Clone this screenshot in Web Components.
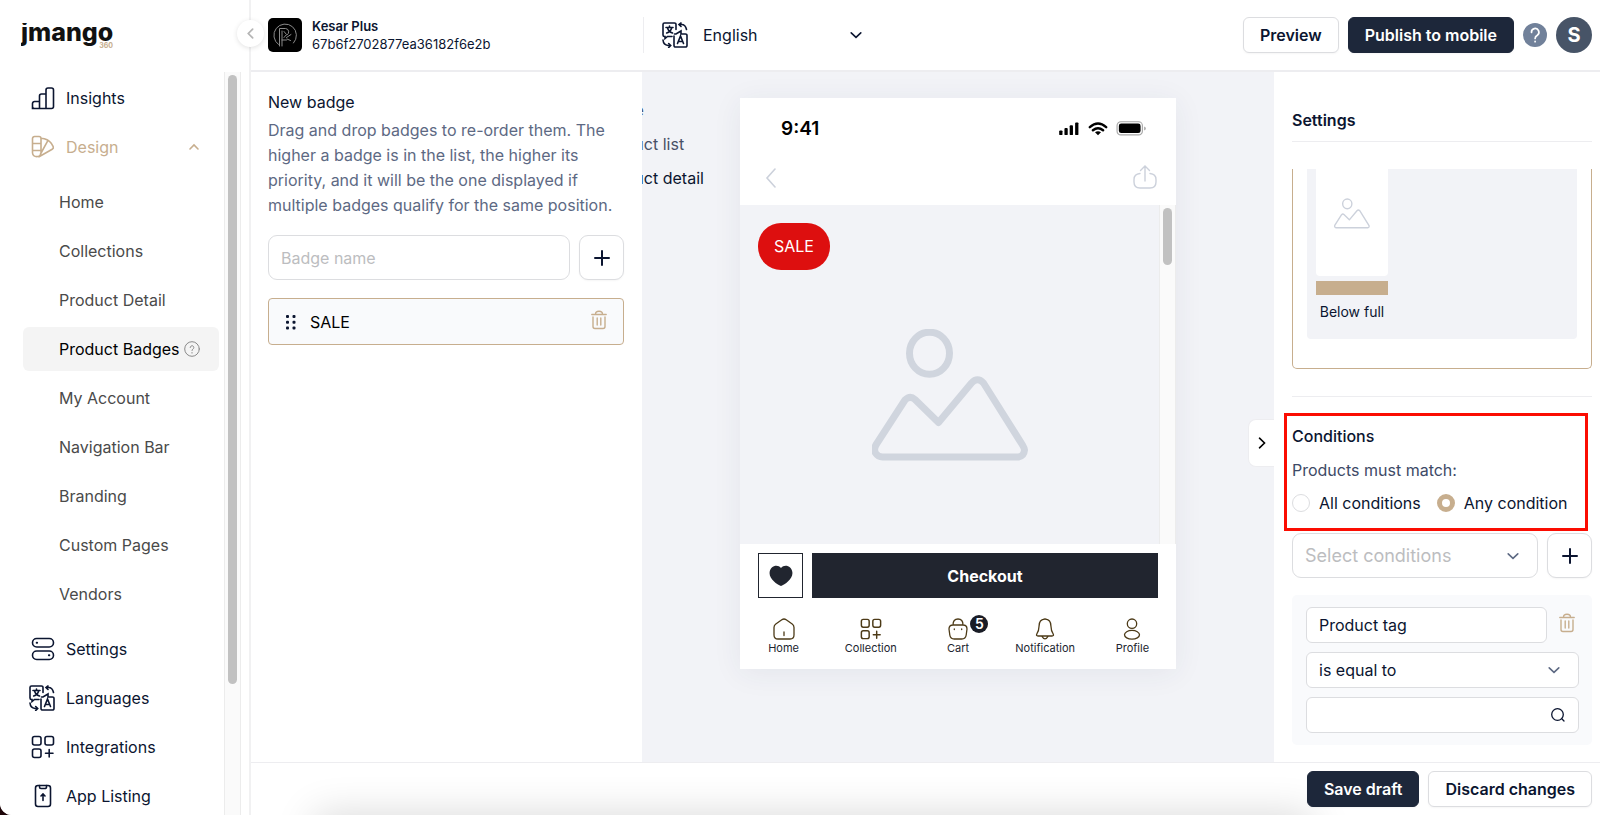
<!DOCTYPE html>
<html lang="en">
<head>
<meta charset="utf-8">
<title>Product Badges</title>
<style>
    body {
        margin: 0;
        background-color: #1d0508;
        font-family: Inter, "Liberation Sans", sans-serif;
        font-size: 16px;
        color: #0b1530;
        --tan: #c7ae8e;
        --navy: #1d273a;
        --line: #ededf0;
        --control: #dcdde0;
        --canvas: #f2f3f7;
        --muted: #5d6983;
    }
</style>
</head>
<body>
<badge-editor></badge-editor>

<script>
const ICONS = {
    insights: ["0 0 24 24", `<path d="M1.500 22.500v-5a2 2 0 0 1 2-2h5v7zM8.500 22.500V10a2 2 0 0 1 2-2H15v14.500zM15 22.500V4a2 2 0 0 1 2-2h3.500a2 2 0 0 1 2 2v16.500a2 2 0 0 1-2 2H3.500a2 2 0 0 1-2-2"/>`],
    design: ["0 0 24 24", `<path d="M3.500 1.500H8a2 2 0 0 1 2 2v14.500a4.300 4.300 0 0 1-8.500 0V3.500a2 2 0 0 1 2-2zM1.500 8.500H10M1.500 15.500H10M10 3.200q7 .5 10.200 5l2 3.500q.6 1.500-1 2.600L8 21.800M17 5.300 9.500 19"/>`],
    settings: ["0 0 24 24", `<rect x="1.500" y="1.500" width="21" height="8.500" rx="4.200"/><rect x="1.500" y="14" width="21" height="8.500" rx="4.200"/><path stroke-width="2" d="M5.700 5.700h.4M17.900 18.300h.4"/>`],
    translate: ["0 0 26 26", `<path d="M14 7.500V2.500a1.500 1.500 0 0 0-1.500-1.500h-10A1.500 1.500 0 0 0 1 2.500V13a1.500 1.500 0 0 0 1.500 1.500H3v2l2.500-2H10M12.500 12h1.500l5-3v3h4.500a1.500 1.500 0 0 1 1.500 1.500v10a1.500 1.500 0 0 1-1.500 1.500H13.500a1.500 1.500 0 0 1-1.500-1.500V14M4 5.500h7M7.500 4v1.500M5.500 5.700q1 4 5 5.300M9.700 5.700q-1 4-5 5.300M15.500 21.500l3-7.500 3 7.500M16.500 19.500h4M17 2.500h2.500q4 0 5 5M19 1l-2 1.500L19 4.500M1 18q.5 5 5 5.500h2.500M6.700 21.500l2 2-2 2"/>`],
    grid: ["0 0 24 24", `<rect x="1.500" y="1.500" width="8.500" height="8.500" rx="2"/><rect x="14" y="1.500" width="8.500" height="8.500" rx="2"/><rect x="1.500" y="14" width="8.500" height="8.500" rx="2"/><path d="M18.200 14.500v7.500M14.500 18.200h7.500"/>`],
    listing: ["0 0 24 24", `<rect x="4.500" y="1.500" width="15" height="21" rx="2.500"/><path d="M8.500 1.500v1.500a1.500 1.500 0 0 0 1.500 1.500h4a1.500 1.500 0 0 0 1.500-1.500V1.500M12 16.500v-6M10 12l2-2 2 2"/>`],
    help: ["0 0 16 16", `<circle cx="8" cy="8" r="7.300"/><path d="M6.200 6.500a1.800 1.800 0 1 1 2.800 1.500q-1 .6-1 1.500M8 11.500v.6"/>`],
    question: ["0 0 24 24", `<path d="M8.500 9.500a3.700 3.700 0 1 1 5.800 2.700q-2.200 1.300-2.200 3.300M12.100 18.300v.4"/>`],
    up: ["0 0 12 12", `<path d="M2 8l4-4 4 4"/>`],
    down: ["0 0 12 12", `<path d="M1.200 3.800 6 8.300l4.800-4.500"/>`],
    left: ["0 0 12 12", `<path d="M8 2 4 6l4 4"/>`],
    right: ["0 0 12 12", `<path d="M3.500 1.200 8.500 6l-5 4.800"/>`],
    back: ["0 0 20 20", `<path d="M14 1 6 10l8 9"/>`],
    plus: ["0 0 16 16", `<path d="M8 1v14M1 8h14"/>`],
    drag: ["0 0 12 16", `<g fill="currentColor" stroke="none"><rect x="1" y="1" width="3" height="3" rx="1"/><rect x="7.500" y="1" width="3" height="3" rx="1"/><rect x="1" y="6.700" width="3" height="3" rx="1"/><rect x="7.500" y="6.700" width="3" height="3" rx="1"/><rect x="1" y="12.500" width="3" height="3" rx="1"/><rect x="7.500" y="12.500" width="3" height="3" rx="1"/></g>`],
    trash: ["0 0 16 20", `<path d="M.8 4.500h14.400M4.500 4.300a3.500 3 0 0 1 7 0M2 7v9.500A2 2 0 0 0 4 18.500h8a2 2 0 0 0 2-2V7M6.200 8v7M9.800 8v7"/>`],
    search: ["0 0 16 16", `<circle cx="7.500" cy="7.500" r="5.800"/><path d="M11.800 11.800 14 14"/>`],
    signal: ["0 0 22 16", `<g fill="currentColor" stroke="none"><rect x="0" y="10" width="3.500" height="5" rx="1"/><rect x="5.600" y="7.500" width="3.500" height="7.500" rx="1"/><rect x="11.200" y="4.500" width="3.500" height="10.500" rx="1"/><rect x="17" y="1.500" width="3.500" height="13.500" rx="1"/></g>`],
    wifi: ["0 0 20 16", `<path stroke-width="2.600" d="M1.300 6.500q8.700-7.500 17.400 0M4.600 9.900q5.400-4.500 10.800 0"/><path fill="currentColor" stroke="none" d="M6.800 12q3.200-2.400 6.400 0L10 15.300z"/>`],
    battery: ["0 0 32 16", `<rect x=".6" y=".8" width="27" height="14" rx="4" stroke="#a6a6a6" stroke-width="1.200"/><rect x="2.500" y="2.700" width="23.200" height="10.200" rx="2.500" fill="currentColor" stroke="none"/><path d="M29.500 5.800v4.400q1.800-.7 1.800-2.200t-1.800-2.200z" fill="#a6a6a6" stroke="none"/>`],
    share: ["0 0 24 24", `<path d="M12 16V1.500M7.500 5.500 12 1l4.500 4.500M7 8.500q-6 .5-6 6v2.500q0 6 6 6h10q6 0 6-6v-2.500q0-5.500-6-6"/>`],
    picture: ["0 0 156 132", `<ellipse cx="57.500" cy="24.200" rx="20" ry="21"/><path stroke-linejoin="round" d="M10.500 128h136q5.500-1 6-7-.2-2-2-5L111.500 54q-6-6.500-12 0L66.500 93.500 43 70.500q-5-4.500-10 .5L4.500 115q-3.200 5-1 9 2.500 4 7 4z"/>`],
    heart: ["0 0 24 22", `<path fill="currentColor" stroke="none" d="M12 21C8 19.500 0 13.500.6 7.500 1 1 8.500-1.500 12 3c3.500-4.500 11-2 11.400 4.500C24 13.500 16 19.500 12 21z"/>`],
    home: ["0 0 22 22", `<path d="M8.800 1.700q2.200-1.400 4.400 0l6 4.300q1.800 1.300 1.800 3.500V17q0 4-4 4H5q-4 0-4-4V9.500Q1 7.300 2.800 6zM11 14v3.500"/>`],
    cart: ["0 0 22 22", `<path d="M2 11q0-4 4-4h10q4 0 4 4l-.8 6q-.6 4-4.500 4H7.300q-3.900 0-4.500-4zM6 7q0-6 5-6t5 6M7.300 11v.5M14.700 11v.5"/>`],
    bell: ["0 0 22 22", `<path d="M11 1.200q6 0 6 7.300 0 4 2.200 7.500.9 2-1.200 2H4q-2.100 0-1.200-2Q5 12.500 5 8.500q0-7.300 6-7.300zM9 1.500q2-1 4 0M8 18.300q3 5 6 0"/>`],
    profile: ["0 0 22 22", `<circle cx="11" cy="5.700" r="4.700"/><ellipse cx="11" cy="16.800" rx="7.500" ry="4.400"/>`],
    kp: ["0 0 34 34", `<path d="M10.500 26.500a11.300 11.300 0 1 1 15-1.500M11.500 28V10.500h6a3.500 3.500 0 0 1 1.500 6.500M14 28V13M14 22h4.500M16 13.500l2.500 3-2.500 3M18.500 19.500l4.500-3M19 21l3.500 1.500"/>`]
};

// <app-icon name="plus">, sized by its own width and height
class AppIcon extends HTMLElement {
    connectedCallback() {
        const root = this.attachShadow({ mode: "open" });
        const [viewBox, shapes] = ICONS[this.getAttribute("name")];
        const stroke = this.getAttribute("stroke") || "1.6";
        root.innerHTML = `
            <style>
                :host { display: block; width: 24px; height: 24px; flex: none; }
                svg { display: block; width: 100%; height: 100%; }
            </style>
            <svg viewBox="${viewBox}" fill="none" stroke="currentColor" stroke-width="${stroke}" stroke-linecap="round" aria-hidden="true">${shapes}</svg>
        `;
    }
}

// Base class: clones the static template of each element
class BaseElement extends HTMLElement {
    constructor() {
        super();
        this.attachShadow({ mode: "open" });
        const template = document.createElement("template");
        template.innerHTML = this.constructor.html;
        this.shadowRoot.appendChild(template.content.cloneNode(true));
    }
}

class AppButton extends BaseElement {
    static html = `
        <style>
            :host { display: block; flex: none; }
            button {
                box-sizing: border-box;
                width: 100%;
                height: 36px;
                padding: 0 16px;
                border: 1px solid var(--control);
                border-radius: 6px;
                background-color: white;
                color: #0b1530;
                font: 600 16px Inter, sans-serif;
                white-space: nowrap;
                box-shadow: 0 1px 2px rgba(0, 0, 0, 0.04);
                cursor: pointer;
            }
            :host([dark]) button { background-color: var(--navy); border-color: var(--navy); color: white; }
            :host([square]) button {
                display: grid;
                place-items: center;
                width: 45px;
                height: 45px;
                padding: 0;
                border-radius: 9px;
            }
        </style>
        <button type="button"><slot></slot></button>
    `;

    connectedCallback() {
        const label = this.getAttribute("label");
        if (label) this.shadowRoot.querySelector("button").setAttribute("aria-label", label);
    }
}

class AppSelect extends BaseElement {
    static html = `
        <style>
            :host { display: grid; align-items: center; font-size: 16px; }
            select, app-icon { grid-area: 1 / 1; }
            select {
                box-sizing: border-box;
                width: 100%;
                height: 36px;
                padding: 0 12px;
                border: 1px solid var(--control);
                border-radius: 6px;
                background-color: white;
                color: #0b1530;
                font: inherit;
                appearance: none;
            }
            app-icon { width: 12px; height: 12px; margin-right: 19px; justify-self: end; color: #5d6983; pointer-events: none; }
            :host([large]) { font-size: 18px; }
            :host([large]) select { height: 45px; border-radius: 9px; color: #bcbdc0; }
            :host([plain]) select { border-color: transparent; padding: 0; }
            :host([plain]) app-icon { margin-right: 0; color: #0b1530; }
        </style>
        <select></select>
        <app-icon name="down"></app-icon>
    `;

    connectedCallback() {
        const select = this.shadowRoot.querySelector("select");
        select.setAttribute("aria-label", this.getAttribute("label"));
        select.add(new Option(this.getAttribute("value")));
    }
}

class ScrollTrack extends BaseElement {
    static html = `
        <style>
            :host {
                display: block;
                box-sizing: border-box;
                width: 17px;
                padding: 3px;
                border: solid #ececec;
                border-width: 0 1px;
                background-color: #fafafa;
            }
            div { width: 9px; height: var(--thumb, 57px); border-radius: 5px; background-color: #c1c1c1; }
        </style>
        <div></div>
    `;
}

class NavItem extends BaseElement {
    static html = `
        <style>
            :host { display: block; }
            a {
                display: flex;
                align-items: center;
                gap: 11px;
                height: 44px;
                padding: 0 19px 0 8px;
                border-radius: 6px;
                color: #0b1530;
                text-decoration: none;
                white-space: nowrap;
            }
            :host([sub]) a { padding-left: 36px; gap: 4px; color: #4a4a4a; }
            :host([open]) a { color: var(--tan); }
            :host([active]) a { background-color: #f4f4f4; color: #000; }
            ::slotted([slot="end"]) { margin-left: auto; }
        </style>
        <a href="#"><slot name="icon"></slot><slot></slot><slot name="end"></slot></a>
    `;
}

class SideNav extends BaseElement {
    static html = `
        <style>
            :host { display: flex; flex-direction: column; min-height: 0; background-color: white; border-right: 2px solid #f1f1f2; }
            .logo { flex: none; display: block; height: 72px; box-sizing: border-box; padding: 16px 0 0 21px; text-decoration: none; }
            .word {
                display: block;
                color: #111;
                font-size: 25px;
                line-height: 32px;
                font-weight: 800;
                clip-path: inset(7px 0 0 0);
            }
            .sub { display: block; width: 92px; margin-top: -6px; text-align: right; font-size: 7px; line-height: 8px; font-weight: 700; color: var(--tan); }
            .body { flex: 1; display: flex; min-height: 0; padding-right: 8px; }
            nav { flex: 1; display: flex; flex-direction: column; gap: 5px; padding: 4px 5px 0 23px; overflow: hidden; }
            nav > * { flex: none; }
            .group { display: grid; gap: 5px; padding: 6px 0; }
            scroll-track { --thumb: 609px; }
            .small { width: 12px; height: 12px; }
            .help { width: 16px; height: 16px; color: #8a8a8a; }
            .wide { width: 26px; height: 26px; margin-left: -2px; }
        </style>
        <a class="logo" href="#"><span class="word">jmango</span><span class="sub">360</span></a>
        <div class="body">
            <nav>
                <nav-item><app-icon slot="icon" name="insights"></app-icon>Insights</nav-item>
                <nav-item open><app-icon slot="icon" name="design"></app-icon>Design<app-icon class="small" slot="end" name="up"></app-icon></nav-item>
                <div class="group">
                    <nav-item sub>Home</nav-item>
                    <nav-item sub>Collections</nav-item>
                    <nav-item sub>Product Detail</nav-item>
                    <nav-item sub active>Product Badges <app-icon class="help" name="help" stroke="1"></app-icon></nav-item>
                    <nav-item sub>My Account</nav-item>
                    <nav-item sub>Navigation Bar</nav-item>
                    <nav-item sub>Branding</nav-item>
                    <nav-item sub>Custom Pages</nav-item>
                    <nav-item sub>Vendors</nav-item>
                </div>
                <nav-item><app-icon slot="icon" name="settings"></app-icon>Settings</nav-item>
                <nav-item><app-icon class="wide" slot="icon" name="translate"></app-icon>Languages</nav-item>
                <nav-item><app-icon slot="icon" name="grid"></app-icon>Integrations</nav-item>
                <nav-item><app-icon slot="icon" name="listing"></app-icon>App Listing</nav-item>
            </nav>
            <scroll-track></scroll-track>
        </div>
    `;
}

class TopBar extends BaseElement {
    static html = `
        <style>
            :host {
                position: relative;
                display: flex;
                align-items: center;
                height: 70px;
                padding: 0 8px 0 17px;
                border-bottom: 2px solid var(--line);
                background-color: white;
            }
            .collapse {
                position: absolute;
                left: -14px;
                top: 20px;
                display: grid;
                place-items: center;
                width: 27px;
                height: 27px;
                padding: 0;
                border: 0;
                border-radius: 50%;
                background-color: white;
                color: #b5b5b5;
                box-shadow: 0 1px 5px rgba(0, 0, 0, 0.12);
            }
            .collapse app-icon { width: 13px; height: 13px; }
            .store { display: flex; align-items: center; gap: 10px; width: 375px; font-size: 13px; line-height: 18px; }
            .store p { margin: 0; }
            .store b { display: block; font-weight: 600; }
            .store app-icon { width: 34px; height: 34px; border-radius: 5px; background-color: #000; color: #8b8b8b; }
            .language { display: flex; align-items: center; gap: 14px; height: 36px; padding-left: 18px; border-left: 1px solid var(--line); }
            .language app-icon { width: 26px; height: 26px; }
            .language app-select { width: 160px; }
            .actions { display: flex; align-items: center; gap: 9px; margin-left: auto; }
            .round {
                display: grid;
                place-items: center;
                width: 24px;
                height: 24px;
                padding: 0;
                border: 0;
                border-radius: 50%;
                background-color: #71819a;
                color: white;
                font: 700 20px Inter, sans-serif;
            }
            .avatar { width: 36px; height: 36px; background-color: #475467; }
        </style>
        <button class="collapse" aria-label="Collapse menu"><app-icon name="left"></app-icon></button>
        <div class="store">
            <app-icon name="kp" stroke="1"></app-icon>
            <p><b>Kesar Plus</b>67b6f2702877ea36182f6e2b</p>
        </div>
        <div class="language">
            <app-icon name="translate"></app-icon>
            <app-select plain label="Language" value="English"></app-select>
        </div>
        <div class="actions">
            <app-button>Preview</app-button>
            <app-button dark>Publish to mobile</app-button>
            <button class="round" aria-label="Help"><app-icon name="question" stroke="1.700"></app-icon></button>
            <button class="round avatar">S</button>
        </div>
    `;
}

class BadgeList extends BaseElement {
    static html = `
        <style>
            :host { display: block; padding: 19px 18px 0 17px; background-color: white; }
            h2 { margin: 0; font-size: 16px; line-height: 22px; font-weight: 400; }
            p { margin: 5px 0 17px; line-height: 25px; color: var(--muted); }
            form { display: flex; gap: 9px; margin-bottom: 18px; }
            input {
                flex: 1;
                min-width: 0;
                box-sizing: border-box;
                height: 45px;
                padding: 0 12px;
                border: 1px solid var(--control);
                border-radius: 9px;
                font: inherit;
            }
            input::placeholder { color: #bcbdc0; }
            .plus { width: 16px; height: 16px; }
            .badge {
                display: flex;
                align-items: center;
                gap: 13px;
                height: 45px;
                padding: 0 16px;
                border: 1px solid var(--tan);
                border-radius: 4px;
                background-color: #f9fafc;
                color: #000;
            }
            .drag { width: 12px; height: 16px; color: #0b1530; }
            .badge button { margin: 0 0 4px auto; padding: 0; border: 0; background: none; color: var(--tan); }
            .trash { width: 16px; height: 20px; }
        </style>
        <h2>New badge</h2>
        <p>Drag and drop badges to re-order them. The higher a badge is in the list, the higher its priority, and it will be the one displayed if multiple badges qualify for the same position.</p>
        <form>
            <input type="text" placeholder="Badge name" aria-label="Badge name">
            <app-button square label="Add badge"><app-icon class="plus" name="plus" stroke="2"></app-icon></app-button>
        </form>
        <div class="badge">
            <app-icon class="drag" name="drag"></app-icon>
            SALE
            <button type="button" aria-label="Delete badge"><app-icon class="trash" name="trash" stroke="1.400"></app-icon></button>
        </div>
    `;
}

class PhonePreview extends BaseElement {
    static html = `
        <style>
            :host { display: block; background-color: white; box-shadow: 0 4px 28px rgba(40, 50, 90, 0.07); color: #21252f; }
            .status { display: flex; align-items: center; gap: 8px; padding: 16px 29px 0 41px; height: 28px; color: #000; font-size: 19px; font-weight: 600; }
            .status .signal { width: 21px; height: 15px; margin-left: auto; }
            .status .wifi { width: 20px; height: 15px; }
            .status .battery { width: 31px; height: 15px; }
            .bar { display: flex; justify-content: space-between; padding: 23px 19px 16px 21px; color: #ccd1db; }
            .bar .back { width: 20px; height: 20px; margin-top: 3px; }
            .screen { display: flex; height: 339px; }
            .product { flex: 1; position: relative; background-color: var(--canvas); }
            .tag {
                position: absolute;
                left: 18px;
                top: 18px;
                padding: 0 16px;
                border-radius: 23px;
                background-color: #dd0f0f;
                color: white;
                line-height: 47px;
            }
            .product app-icon { width: 156px; height: 132px; margin: 124px 0 0 132px; color: #d0d5de; }
            .buy { display: flex; gap: 9px; padding: 9px 18px 0; }
            .buy button { box-sizing: border-box; height: 45px; border: 1px solid #21252f; padding: 0; }
            .like { display: grid; place-items: center; width: 45px; background-color: white; color: #21252f; }
            .like app-icon { height: 22px; }
            .checkout { flex: 1; background-color: #21252f; color: white; font: 700 16px Inter, sans-serif; }
            nav { display: grid; grid-template-columns: repeat(5, 1fr); padding: 20px 0 12px; }
            nav a { position: relative; display: grid; justify-items: center; color: inherit; text-decoration: none; font-size: 11px; line-height: 17px; }
            nav app-icon { width: 22px; height: 22px; color: #4c3a17; }
            .count {
                position: absolute;
                left: 56px;
                top: -3px;
                width: 18px;
                border-radius: 9px;
                background-color: #191c26;
                color: white;
                font-size: 14px;
                line-height: 18px;
                font-weight: 600;
                text-align: center;
            }
        </style>
        <div class="status">
            9:41
            <app-icon class="signal" name="signal"></app-icon>
            <app-icon class="wifi" name="wifi"></app-icon>
            <app-icon class="battery" name="battery"></app-icon>
        </div>
        <div class="bar">
            <app-icon class="back" name="back"></app-icon>
            <app-icon name="share" stroke="1.400"></app-icon>
        </div>
        <div class="screen">
            <div class="product">
                <app-icon name="picture" stroke="7"></app-icon>
                <span class="tag">SALE</span>
            </div>
            <scroll-track></scroll-track>
        </div>
        <div class="buy">
            <button class="like" aria-label="Add to wishlist"><app-icon name="heart"></app-icon></button>
            <button class="checkout">Checkout</button>
        </div>
        <nav>
            <a href="#"><app-icon name="home" stroke="1.300"></app-icon>Home</a>
            <a href="#"><app-icon name="grid"></app-icon>Collection</a>
            <a href="#"><app-icon name="cart" stroke="1.300"></app-icon>Cart<span class="count">5</span></a>
            <a href="#"><app-icon name="bell" stroke="1.300"></app-icon>Notification</a>
            <a href="#"><app-icon name="profile" stroke="1.300"></app-icon>Profile</a>
        </nav>
    `;
}

class PreviewCanvas extends BaseElement {
    static html = `
        <style>
            :host {
                position: relative;
                display: grid;
                grid-template-columns: 1fr 436px 1fr;
                align-items: start;
                min-width: 0;
                padding-top: 26px;
                background-color: var(--canvas);
                overflow: hidden;
            }
            /* the page tabs slide under the badge list */
            .tabs { display: grid; justify-items: start; margin-left: -43px; line-height: 34px; white-space: nowrap; margin-top: -5px; }
            .tabs a { color: #475066; text-decoration: none; }
            .tabs .on { color: #0b1530; }
            .toggle {
                position: absolute;
                right: 0;
                top: 347px;
                display: grid;
                place-items: center;
                width: 26px;
                height: 48px;
                padding: 0;
                border: 1px solid var(--line);
                border-right: 0;
                border-radius: 8px 0 0 8px;
                background-color: white;
                color: #000;
            }
            .toggle app-icon { width: 12px; height: 12px; }
        </style>
        <nav class="tabs">
            <a href="#">Home</a>
            <a href="#">Product list</a>
            <a href="#" class="on">Product detail</a>
        </nav>
        <phone-preview></phone-preview>
        <button class="toggle" aria-label="Hide settings"><app-icon name="right"></app-icon></button>
    `;
}

class SettingsPanel extends BaseElement {
    static html = `
        <style>
            :host { display: block; padding: 36px 8px 0 18px; background-color: white; overflow: hidden; }
            h2, h3 { margin: 0; font-size: 16px; line-height: 24px; font-weight: 600; }
            h2 { padding-bottom: 9px; margin-bottom: 27px; border-bottom: 1px solid var(--line); }
            h3 { font-weight: 500; }
            .position { padding: 0 14px 29px; border: 1px solid var(--tan); border-top: 0; border-radius: 0 0 5px 5px; margin-bottom: 27px; }
            .options { padding: 0 9px 17px; border-radius: 0 0 4px 4px; background-color: var(--canvas); }
            .option { width: 72px; text-align: center; font-size: 14px; line-height: 20px; white-space: nowrap; }
            .thumb { height: 107px; border-radius: 0 0 4px 4px; background-color: white; color: #ccd1db; }
            .thumb app-icon { width: 36px; height: 31px; margin: 0 auto; padding-top: 29px; }
            .full { height: 14px; margin: 5px 0 7px; background-color: var(--tan); }
            .divider { border-top: 1px solid var(--line); }
            fieldset {
                margin: 16px 0 2px -8px;
                min-width: 0;
                padding: 0 0 0 5px;
                width: 293px;
                border: 3px solid #fb0d02;
            }
            fieldset h3 { padding-top: 8px; }
            fieldset p { margin: 10px 0 9px; line-height: 24px; color: #3d4a66; }
            .radios { display: flex; gap: 16px; padding-bottom: 13px; }
            label { display: flex; align-items: center; gap: 9px; line-height: 24px; white-space: nowrap; }
            input[type="radio"] { appearance: none; box-sizing: border-box; width: 18px; height: 18px; margin: 0; border: 1px solid var(--control); border-radius: 50%; background-color: white; }
            input[type="radio"]:checked { border: 5px solid var(--tan); }
            .row { display: flex; align-items: center; gap: 9px; }
            .row app-select { flex: 1; }
            .plus { width: 16px; height: 16px; }
            .condition { display: grid; gap: 9px; margin-top: 17px; padding: 12px 13px 12px 14px; border-radius: 5px; background-color: #f9fafc; }
            input[type="text"], input[type="search"] {
                box-sizing: border-box;
                width: 100%;
                min-width: 0;
                height: 36px;
                padding: 0 12px;
                border: 1px solid var(--control);
                border-radius: 6px;
                background-color: white;
                color: inherit;
                font: inherit;
            }
            .condition .row { gap: 12px; }
            .row button { padding: 0 4px 4px 0; border: 0; background: none; color: var(--tan); }
            .trash { width: 16px; height: 20px; }
            .search { display: grid; align-items: center; }
            .search > * { grid-area: 1 / 1; }
            .search app-icon { width: 16px; height: 16px; justify-self: end; margin-right: 13px; }
        </style>
        <h2>Settings</h2>
        <div class="position">
            <div class="options">
                <div class="option">
                    <div class="thumb"><app-icon name="picture" stroke="6"></app-icon></div>
                    <div class="full"></div>
                    Below full
                </div>
            </div>
        </div>
        <div class="divider"></div>
        <fieldset>
            <h3>Conditions</h3>
            <p>Products must match:</p>
            <div class="radios">
                <label><input type="radio" name="match">All conditions</label>
                <label><input type="radio" name="match" checked>Any condition</label>
            </div>
        </fieldset>
        <div class="row">
            <app-select large label="Conditions" value="Select conditions"></app-select>
            <app-button square label="Add condition"><app-icon class="plus" name="plus" stroke="2"></app-icon></app-button>
        </div>
        <div class="condition">
            <div class="row">
                <input type="text" value="Product tag" aria-label="Condition field">
                <button type="button" aria-label="Delete condition"><app-icon class="trash" name="trash" stroke="1.400"></app-icon></button>
            </div>
            <app-select label="Operator" value="is equal to"></app-select>
            <div class="search">
                <input type="search" aria-label="Condition value">
                <app-icon name="search" stroke="1.300"></app-icon>
            </div>
        </div>
    `;
}

class ActionBar extends BaseElement {
    static html = `
        <style>
            :host {
                position: relative;
                display: flex;
                justify-content: flex-end;
                gap: 9px;
                height: 44px;
                padding: 8px 8px 0;
                border-top: 1px solid var(--line);
                background-color: white;
                overflow: hidden;
            }
            :host::before {
                content: "";
                position: absolute;
                left: 64px;
                right: 288px;
                top: 100%;
                height: 40px;
                box-shadow: 0 0 40px rgba(0, 0, 0, 0.16);
            }
            app-button { position: relative; }
        </style>
        <app-button dark>Save draft</app-button>
        <app-button>Discard changes</app-button>
    `;
}

class BadgeEditor extends BaseElement {
    static html = `
        <style>
            :host {
                display: grid;
                grid-template-columns: 251px minmax(0, 1fr);
                grid-template-rows: minmax(0, 1fr);
                height: 100vh;
                border-bottom-left-radius: 12px;
                background-color: white;
                overflow: hidden;
            }
            main { display: grid; grid-template-rows: auto minmax(0, 1fr) auto; min-width: 0; }
            .work { display: grid; grid-template-columns: 391px minmax(0, 1fr) 326px; min-height: 0; }
            top-bar { z-index: 1; }
        </style>
        <side-nav></side-nav>
        <main>
            <top-bar></top-bar>
            <div class="work">
                <badge-list></badge-list>
                <preview-canvas></preview-canvas>
                <settings-panel></settings-panel>
            </div>
            <action-bar></action-bar>
        </main>
    `;
}

customElements.define("app-icon", AppIcon);
customElements.define("app-button", AppButton);
customElements.define("app-select", AppSelect);
customElements.define("scroll-track", ScrollTrack);
customElements.define("nav-item", NavItem);
customElements.define("side-nav", SideNav);
customElements.define("top-bar", TopBar);
customElements.define("badge-list", BadgeList);
customElements.define("phone-preview", PhonePreview);
customElements.define("preview-canvas", PreviewCanvas);
customElements.define("settings-panel", SettingsPanel);
customElements.define("action-bar", ActionBar);
customElements.define("badge-editor", BadgeEditor);
</script>
</body>
</html>
